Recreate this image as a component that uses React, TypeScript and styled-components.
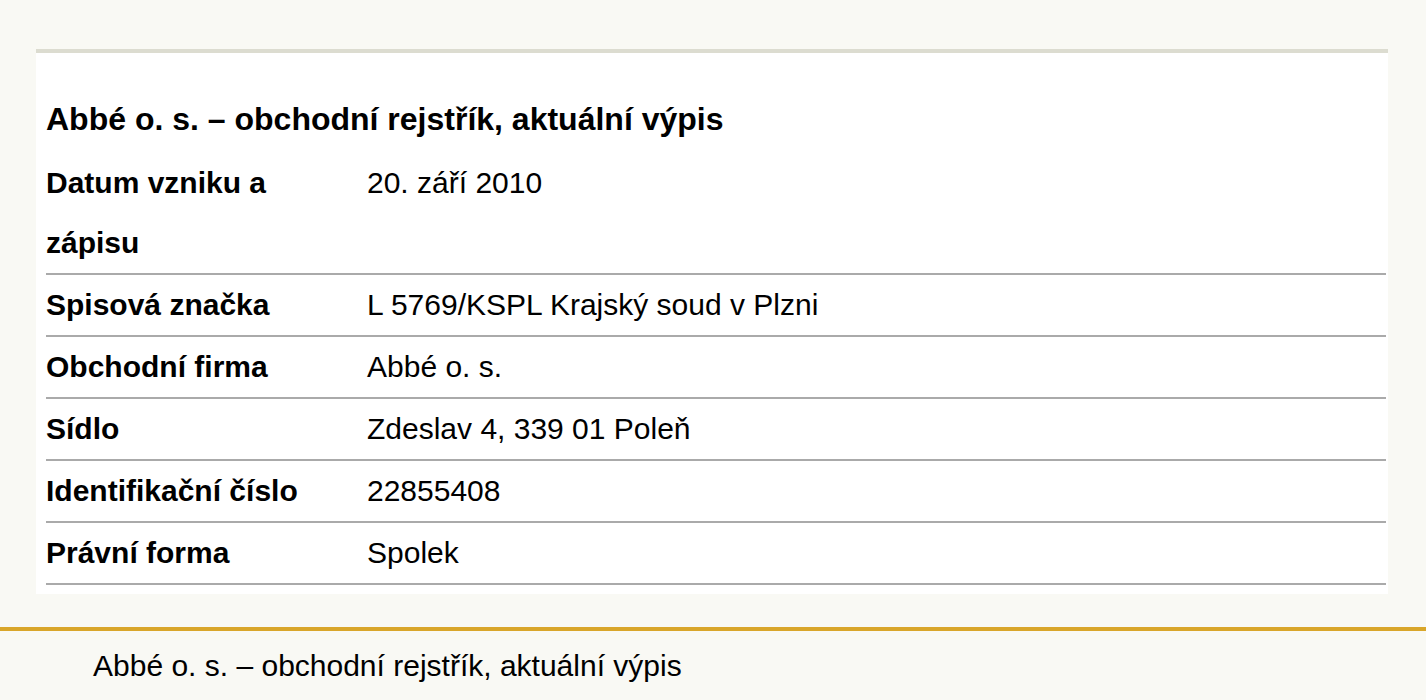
import React from 'react';
import styled, { createGlobalStyle } from 'styled-components';

const GlobalStyle = createGlobalStyle`
  html, body {
    margin: 0;
    padding: 0;
    background: #f9f9f4;
    font-family: 'Liberation Sans', Arial, sans-serif;
    color: #000;
  }
`;

const Page = styled.div({
  display: 'flex',
  flexDirection: 'column',
  paddingTop: '49px'
});

const Card = styled.section({
  width: '1352px',
  marginLeft: '36px',
  boxSizing: 'border-box',
  background: '#ffffff',
  borderTop: '4px solid #dcdcd0',
  padding: '0 2px 9px 10px'
});

const Title = styled.h1({
  margin: '34px 0 2px',
  fontSize: '32px',
  lineHeight: '64px',
  fontWeight: 'bold'
});

const Table = styled.div({
  display: 'flex',
  flexDirection: 'column',
  width: '1340px'
});

const Row = styled.div({
  display: 'grid',
  gridTemplateColumns: '321px 1fr',
  borderBottom: '2px solid #aaaaaa',
  fontSize: '30px',
  lineHeight: '60px'
});

const Label = styled.div({
  fontWeight: 'bold',
  paddingRight: '20px'
});

const Value = styled.div({
  fontWeight: 'normal'
});

const Footer = styled.footer({
  marginTop: '33px',
  borderTop: '4px solid #d9a62a',
  padding: '18px 0 0 93px',
  fontSize: '30px',
  lineHeight: 'normal'
});

const rows: [string, string][] = [
  ['Datum vzniku a zápisu', '20. září 2010'],
  ['Spisová značka', 'L 5769/KSPL Krajský soud v Plzni'],
  ['Obchodní firma', 'Abbé o. s.'],
  ['Sídlo', 'Zdeslav 4, 339 01 Poleň'],
  ['Identifikační číslo', '22855408'],
  ['Právní forma', 'Spolek']
];

export default function App() {
  return (
    <Page>
      <GlobalStyle />
      <Card>
        <Title>Abbé o. s. – obchodní rejstřík, aktuální výpis</Title>
        <Table>
          {rows.map(([label, value]) => (
            <Row key={label}>
              <Label>{label}</Label>
              <Value>{value}</Value>
            </Row>
          ))}
        </Table>
      </Card>
      <Footer>Abbé o. s. – obchodní rejstřík, aktuální výpis</Footer>
    </Page>
  );
}
